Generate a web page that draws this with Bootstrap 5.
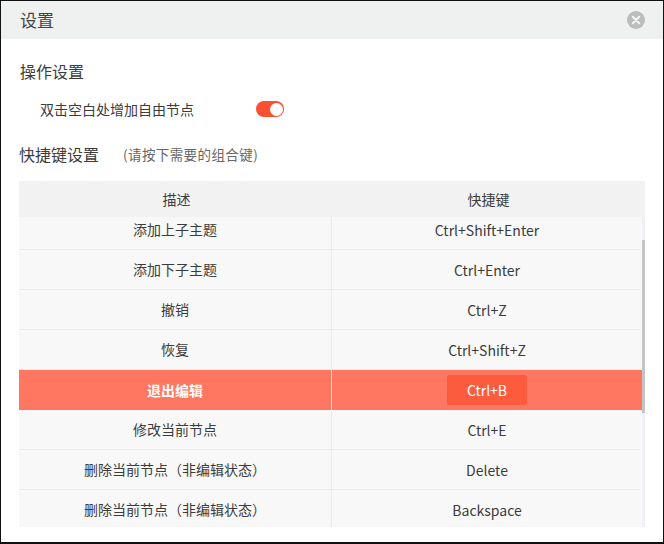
<!DOCTYPE html>
<html lang="zh">
<head>
<meta charset="utf-8">
<title>设置</title>
<link href="https://cdn.jsdelivr.net/npm/bootstrap@5.3.0/dist/css/bootstrap.min.css" rel="stylesheet">
<style>
html,body{height:100%;margin:0;background:#fff}
body{font-family:"Noto Sans CJK SC","Noto Sans",sans-serif;color:#3a3a3a;overflow:hidden}
.dlg{width:664px;height:544px;background:#fff;border-style:solid;border-color:#111;border-width:1px 1px 2px 1px;display:flex;flex-direction:column}
.dlg-head{height:38px;background:#eff0f0;padding:0 18px 0 19px}
.dlg-title{font-size:17px;line-height:38px;color:#444}
.dlg-close{width:18px;height:18px;margin-top:-1px}
.dlg-body{padding:0 18px 0 19px;flex:1;min-height:0}
.sec-title{font-size:16px;line-height:24px;color:#3c3c3c;margin:0}
.sec-one{padding-top:20px}
.opt-row{padding-left:20px;margin-top:14px;height:24px}
.opt-label{font-size:14px;line-height:24px;width:216px;color:#3c3c3c}
.sw{width:28px;height:16px;border-radius:8px;background:#fb5032;position:relative}
.sw::after{content:"";position:absolute;right:1.5px;top:1.5px;width:13px;height:13px;border-radius:50%;background:#fff}
.sec-two{margin-top:21px;margin-left:-1px}
.hint{font-size:13.5px;letter-spacing:.03em;color:#666;margin-left:24px;line-height:24px}
.keys{margin:15px 0 0 -1px;width:626px;height:346px;background:#f8f8f9;position:relative;overflow:hidden}
.keys-head{height:36px;background:#f2f2f3}
.keys-cell{width:313px;font-size:14px;text-align:center;line-height:36px;color:#3c3c3c}
.keys-head .keys-cell:first-child{padding-left:2px}
.keys-row{height:40px;border-bottom:1px solid #ebebec;margin-right:5px}
.keys-row .keys-cell{line-height:39px;border-right:1px solid #ebebec;height:100%}
.keys-row .keys-cell+.keys-cell{border-right:0;width:auto;flex:1;padding-left:2px;line-height:41px}
.keys-row.first{height:33px}
.keys-row.first .keys-cell{line-height:24px}
.keys-row.first .keys-cell+.keys-cell{line-height:26px}
.keys-row.last{height:37px;border-bottom:0}
.keys-row.last .keys-cell{line-height:39px}
.keys-row.last .keys-cell+.keys-cell{line-height:41px}
.keys-row.on{background:#ff7761;border-bottom:0;color:#fff;margin-right:3px}
.keys-row.on .keys-cell{color:#fff;line-height:41px;border-right-color:#ffd5cc}
.keys-row.on .keys-cell+.keys-cell{padding-left:0;line-height:40px}
.keys-row.on .first-col{font-weight:700}
.cap{display:inline-block;width:80px;height:30px;line-height:30px;background:#fd5b3e;border-radius:2px}
.scroll-track{position:absolute;right:0;top:36px;bottom:0;width:3px;background:#f0eff3}
.scroll-thumb{position:absolute;right:0;top:59px;width:3px;height:173px;background:#c4c4c4}
</style>
</head>
<body>
<div class="dlg">
  <div class="dlg-head d-flex justify-content-between align-items-center">
    <div class="dlg-title">设置</div>
    <svg class="dlg-close" viewBox="0 0 18 18" role="img" aria-label="关闭"><circle cx="9" cy="9" r="9" fill="#bdbdbd"/><path d="M5.8 5.8l6.4 6.4M12.2 5.8l-6.4 6.4" stroke="#f4f4f4" stroke-width="2" stroke-linecap="round"/></svg>
  </div>
  <div class="dlg-body">
    <div class="sec-one"><p class="sec-title">操作设置</p></div>
    <div class="opt-row d-flex align-items-center">
      <div class="opt-label">双击空白处增加自由节点</div>
      <div class="sw"></div>
    </div>
    <div class="sec-two d-flex align-items-center">
      <p class="sec-title">快捷键设置</p>
      <span class="hint">(请按下需要的组合键)</span>
    </div>
    <div class="keys">
      <div class="keys-head d-flex"><div class="keys-cell">描述</div><div class="keys-cell">快捷键</div></div>
      <div class="keys-row first d-flex"><div class="keys-cell">添加上子主题</div><div class="keys-cell">Ctrl+Shift+Enter</div></div>
      <div class="keys-row d-flex"><div class="keys-cell">添加下子主题</div><div class="keys-cell">Ctrl+Enter</div></div>
      <div class="keys-row d-flex"><div class="keys-cell">撤销</div><div class="keys-cell">Ctrl+Z</div></div>
      <div class="keys-row d-flex"><div class="keys-cell">恢复</div><div class="keys-cell">Ctrl+Shift+Z</div></div>
      <div class="keys-row on d-flex"><div class="keys-cell first-col">退出编辑</div><div class="keys-cell"><span class="cap">Ctrl+B</span></div></div>
      <div class="keys-row d-flex"><div class="keys-cell">修改当前节点</div><div class="keys-cell">Ctrl+E</div></div>
      <div class="keys-row d-flex"><div class="keys-cell">删除当前节点（非编辑状态）</div><div class="keys-cell">Delete</div></div>
      <div class="keys-row last d-flex"><div class="keys-cell">删除当前节点（非编辑状态）</div><div class="keys-cell">Backspace</div></div>
      <div class="scroll-track"></div>
      <div class="scroll-thumb"></div>
    </div>
  </div>
</div>
<script src="https://cdn.jsdelivr.net/npm/bootstrap@5.3.0/dist/js/bootstrap.bundle.min.js"></script>
</body>
</html>
